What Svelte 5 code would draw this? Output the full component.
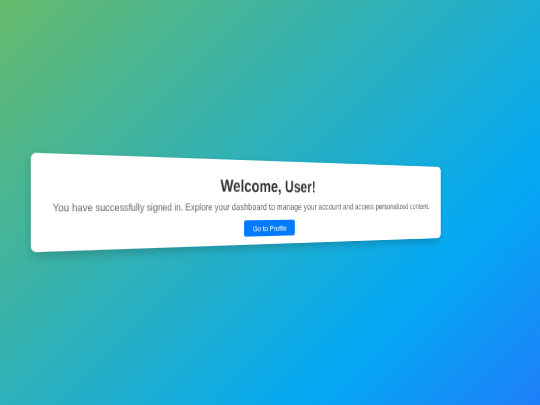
<script>
  const user = "User";
</script>

<main class="page">
  <section class="card">
    <h1>Welcome, {user}!</h1>
    <p>You have successfully signed in. Explore your dashboard to manage your account and access personalized content.</p>
    <button type="button">Go to Profile</button>
  </section>
</main>

<style>
  :global(body) {
    margin: 0;
  }
  .page {
    display: flex;
    justify-content: center;
    align-items: center;
    height: 100vh;
    overflow: hidden;
    background: linear-gradient(135deg, #66bb6a, #03a9f4 75%, #1e7ff8);
    font-family: "Liberation Sans", Arial, sans-serif;
    text-rendering: geometricPrecision;
  }
  .card {
    box-sizing: border-box;
    flex: none;
    width: 520px;
    height: 83px;
    margin-right: 0.6px;
    padding: 16px 20px 0;
    background: #fff;
    border-radius: 5px;
    text-align: center;
    box-shadow: 0 4px 8px rgba(0, 0, 0, 0.18);
    transform: perspective(1000px) rotateY(40deg);
    will-change: transform;
  }
  h1 {
    margin: 0 0 5px;
    font-size: 16.6px;
    color: #333;
  }
  p {
    margin: 0 0 8px;
    font-size: 9.35px;
    white-space: nowrap;
    color: #666;
  }
  button {
    display: block;
    margin: 0 auto;
    height: 16px;
    padding: 0 11px;
    border: none;
    border-radius: 2px;
    background: #007bff;
    color: #fff;
    font-family: inherit;
    font-size: 8px;
  }
</style>
